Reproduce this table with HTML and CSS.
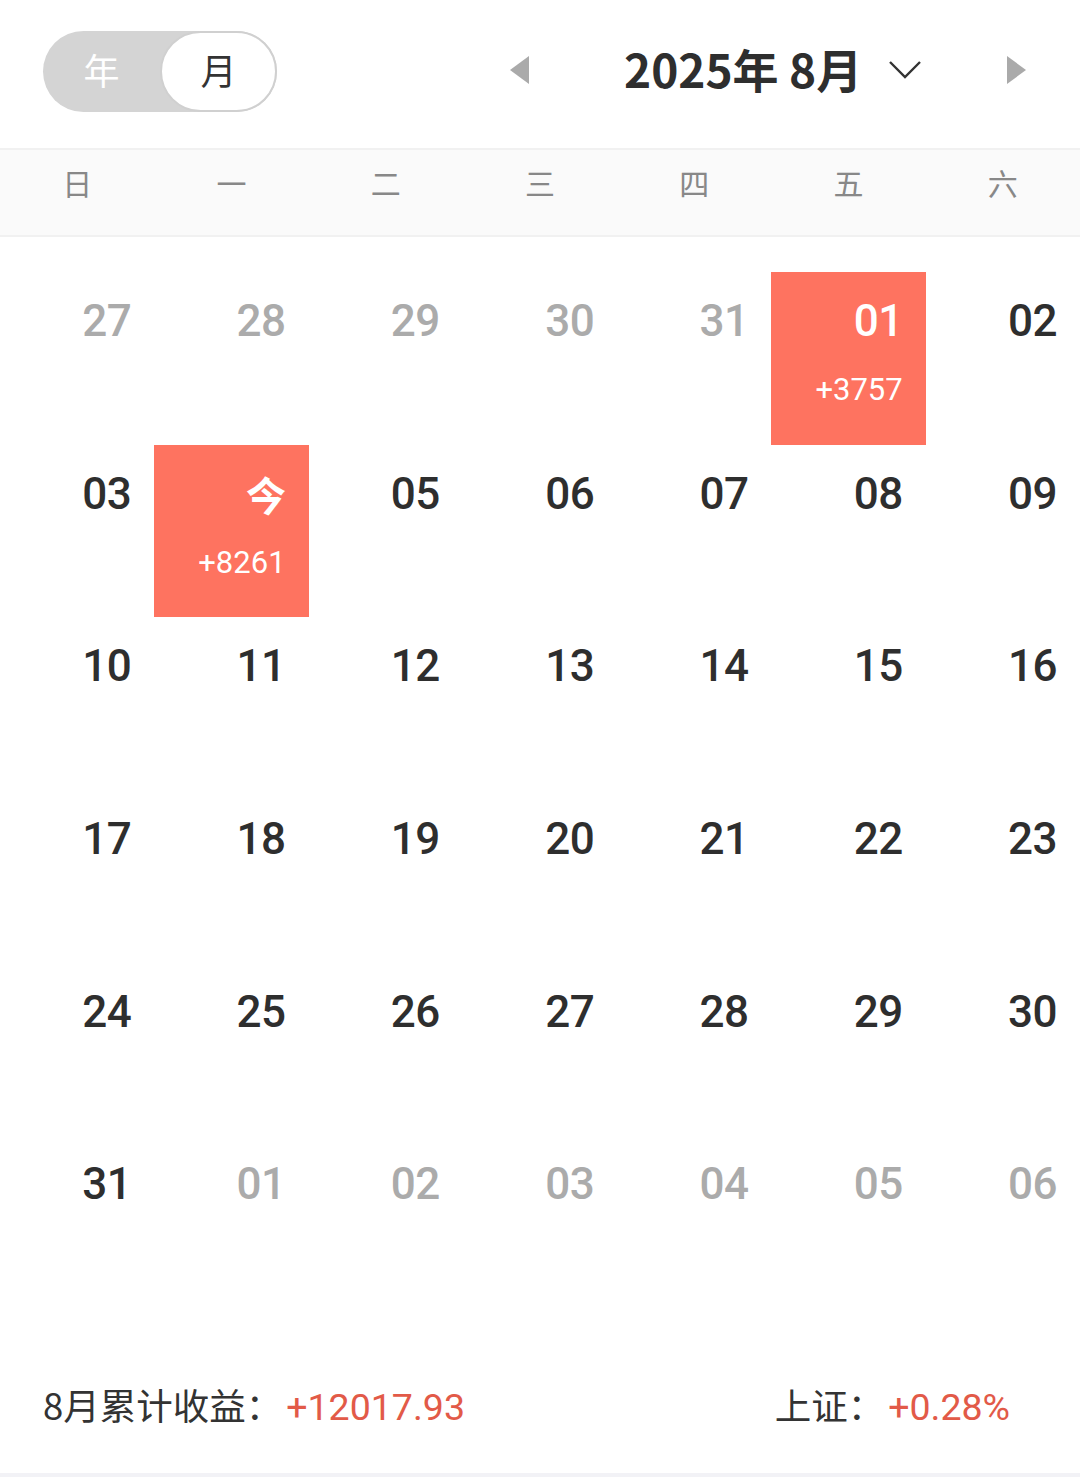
FILE: index.html
```html
<!DOCTYPE html>
<html lang="zh">
<head>
<meta charset="utf-8">
<link rel="stylesheet" href="styles.css">
</head>
<body>
<div class="page">
  <header class="top">
    <div class="toggle">
      <span class="tg tg-off">年</span>
      <span class="tg tg-on">月</span>
    </div>
    <div class="nav">
      <svg class="arrow" width="20" height="28" viewBox="0 0 20 28"><polygon points="19,0 19,28 0,14" fill="#aaaaaa"/></svg>
      <div class="title">2025年 8月</div>
      <svg class="chev" width="34" height="22" viewBox="0 0 34 22"><polyline points="2,3 17,18 32,3" fill="none" stroke="#333" stroke-width="2.4"/></svg>
      <svg class="arrow arrow-r" width="20" height="28" viewBox="0 0 20 28"><polygon points="1,0 1,28 20,14" fill="#aaaaaa"/></svg>
    </div>
  </header>
  <div class="weekdays">
    <span>日</span><span>一</span><span>二</span><span>三</span><span>四</span><span>五</span><span>六</span>
  </div>
  <div class="grid">
    <div class="cell other"><div class="d">27</div></div>
    <div class="cell other"><div class="d">28</div></div>
    <div class="cell other"><div class="d">29</div></div>
    <div class="cell other"><div class="d">30</div></div>
    <div class="cell other"><div class="d">31</div></div>
    <div class="cell hl"><div class="d">01</div><div class="amt">+3757</div></div>
    <div class="cell"><div class="d">02</div></div>

    <div class="cell"><div class="d">03</div></div>
    <div class="cell hl"><div class="d today">今</div><div class="amt">+8261</div></div>
    <div class="cell"><div class="d">05</div></div>
    <div class="cell"><div class="d">06</div></div>
    <div class="cell"><div class="d">07</div></div>
    <div class="cell"><div class="d">08</div></div>
    <div class="cell"><div class="d">09</div></div>

    <div class="cell"><div class="d">10</div></div>
    <div class="cell"><div class="d">11</div></div>
    <div class="cell"><div class="d">12</div></div>
    <div class="cell"><div class="d">13</div></div>
    <div class="cell"><div class="d">14</div></div>
    <div class="cell"><div class="d">15</div></div>
    <div class="cell"><div class="d">16</div></div>

    <div class="cell"><div class="d">17</div></div>
    <div class="cell"><div class="d">18</div></div>
    <div class="cell"><div class="d">19</div></div>
    <div class="cell"><div class="d">20</div></div>
    <div class="cell"><div class="d">21</div></div>
    <div class="cell"><div class="d">22</div></div>
    <div class="cell"><div class="d">23</div></div>

    <div class="cell"><div class="d">24</div></div>
    <div class="cell"><div class="d">25</div></div>
    <div class="cell"><div class="d">26</div></div>
    <div class="cell"><div class="d">27</div></div>
    <div class="cell"><div class="d">28</div></div>
    <div class="cell"><div class="d">29</div></div>
    <div class="cell"><div class="d">30</div></div>

    <div class="cell"><div class="d">31</div></div>
    <div class="cell other"><div class="d">01</div></div>
    <div class="cell other"><div class="d">02</div></div>
    <div class="cell other"><div class="d">03</div></div>
    <div class="cell other"><div class="d">04</div></div>
    <div class="cell other"><div class="d">05</div></div>
    <div class="cell other"><div class="d">06</div></div>
  </div>
  <footer class="foot">
    <div class="stat"><span class="lbl">8月累计收益：</span><span class="val">+12017.93</span></div>
    <div class="stat"><span class="lbl">上证：</span><span class="val">+0.28%</span></div>
  </footer>
</div>
</body>
</html>
```
FILE: styles.css
```css
* { box-sizing: border-box; }
html, body { margin: 0; padding: 0; background: #fff; }
body {
  font-family: Roboto, "Noto Sans", "Noto Sans CJK SC", sans-serif;
  color: #333;
}
.page { width: 1080px; }
.top {
  height: 148px;
  display: flex;
  align-items: flex-start;
  padding: 31px 0 0 43px;
}
.toggle {
  width: 234px;
  height: 81px;
  border-radius: 41px;
  background: #d4d4d4;
  display: flex;
  align-items: stretch;
}
.tg {
  font-family: "Noto Sans CJK SC", sans-serif;
  font-size: 36px;
  display: flex;
  align-items: center;
  justify-content: center;
  padding-bottom: 6px;
}
.tg-off { width: 117px; color: #fff; }
.tg-on {
  width: 117px;
  background: #fff;
  color: #333;
  border: 2px solid #d0d0d0;
  border-radius: 41px;
}
.nav {
  display: flex;
  align-items: center;
  margin-left: 233px;
  height: 78px;
}
.arrow { display: block; }
.title {
  margin-left: 94px;
  font-family: "Noto Sans CJK SC", sans-serif;
  font-weight: 700;
  font-size: 46px;
  color: #2e2e2e;
  line-height: 1;
  width: 236px;
  white-space: nowrap;
  margin-top: -5px;
}
.chev { margin-left: 28px; display: block; }
.arrow-r { margin-left: 84px; }
.weekdays {
  height: 89px;
  background: #fafafa;
  border-top: 2px solid #f1f1f1;
  border-bottom: 2px solid #f1f1f1;
  display: grid;
  grid-template-columns: repeat(7, 1fr);
  align-items: center;
  padding-bottom: 22px;
}
.weekdays span {
  text-align: center;
  font-family: "Noto Sans CJK SC", sans-serif;
  font-weight: 400;
  font-size: 30px;
  line-height: 30px;
  color: #888;
}
.grid {
  display: grid;
  grid-template-columns: repeat(7, 1fr);
  grid-template-rows: repeat(6, 172.7px);
  padding-top: 35px;
}
.cell {
  padding: 24px 23px 0 0;
  text-align: right;
}
.d {
  font-family: Roboto, "Noto Sans CJK SC", sans-serif;
  font-weight: 500;
  font-size: 44px;
  line-height: 50px;
  letter-spacing: -0.5px;
  color: #2e2e2e;
}
.other .d { color: #ababab; }
.hl { background: #fe7360; }
.hl .d { color: #fff; }
.d.today { font-family: "Noto Sans CJK SC", sans-serif; font-size: 40px; font-weight: 700; }
.amt {
  margin-top: 26px;
  font-size: 31px;
  line-height: 36px;
  color: #fff;
}
.foot {
  height: 169px;
  border-bottom: 4px solid #f2f2f6;
  display: flex;
  justify-content: space-between;
  padding: 75px 70px 0 43px;
}
.stat { font-size: 37.5px; line-height: 44px; white-space: nowrap; }
.lbl { font-family: "Noto Sans CJK SC", sans-serif; color: #333; font-size: 36.5px; }
.val { color: #e25a48; margin-left: 4px; }
```
